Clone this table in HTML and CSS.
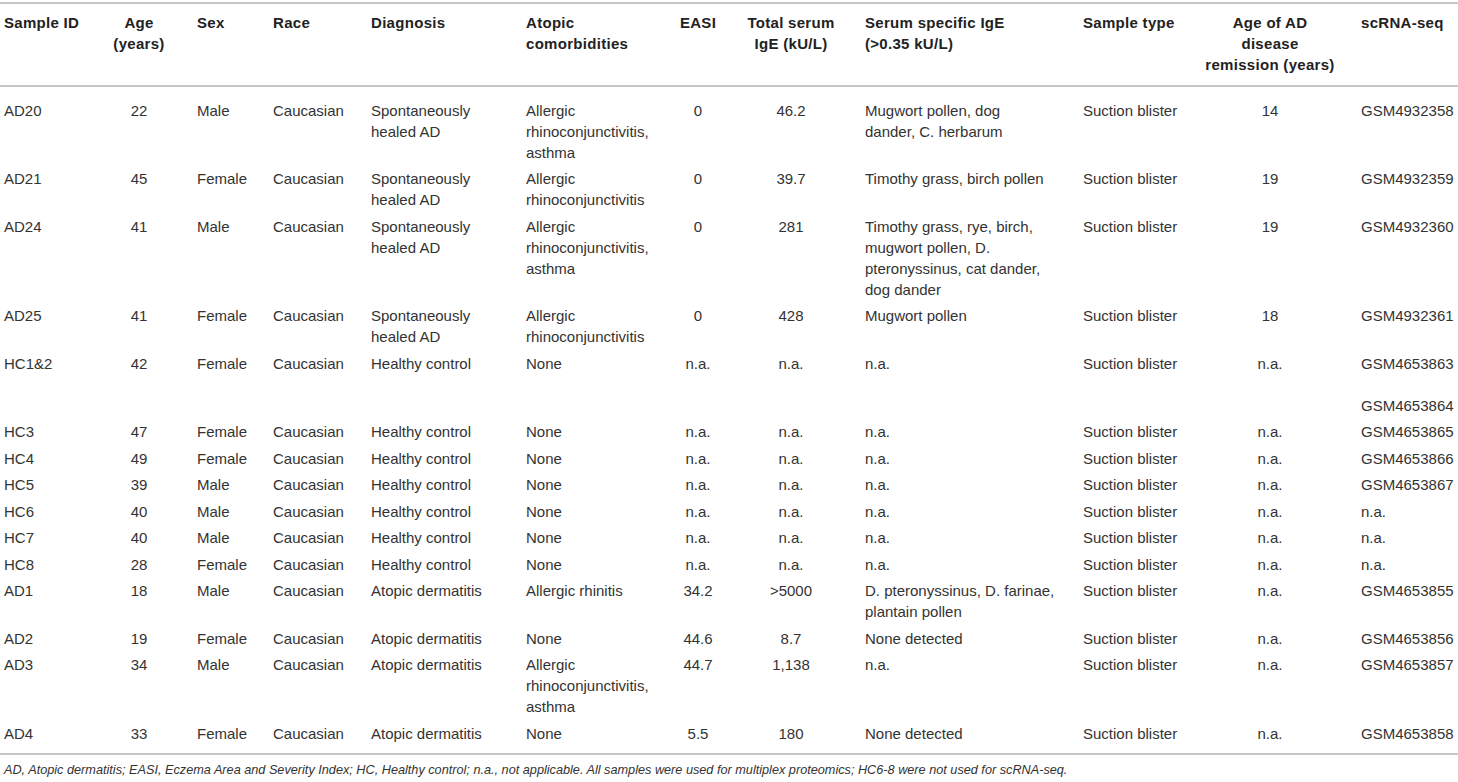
FILE: index.html
```html
<!DOCTYPE html>
<html lang="en">
<head>
<meta charset="utf-8">
<title>Sample characteristics</title>
<link rel="stylesheet" href="styles.css">
</head>
<body>
<div class="wrap">
<table class="data">
<colgroup>
<col class="c-id"><col class="c-age"><col class="c-sex"><col class="c-race"><col class="c-diag"><col class="c-atopic"><col class="c-easi"><col class="c-ige"><col class="c-sige"><col class="c-type"><col class="c-rem"><col class="c-seq">
</colgroup>
<thead>
<tr>
<th>Sample ID</th>
<th class="ctr">Age<br>(years)</th>
<th>Sex</th>
<th>Race</th>
<th>Diagnosis</th>
<th>Atopic<br>comorbidities</th>
<th class="ctr">EASI</th>
<th class="ctr">Total serum<br>IgE (kU/L)</th>
<th>Serum specific IgE<br>(&gt;0.35 kU/L)</th>
<th>Sample type</th>
<th class="ctr">Age of AD<br>disease<br>remission (years)</th>
<th>scRNA-seq</th>
</tr>
</thead>
<tbody>
<tr>
<td>AD20</td><td class="ctr">22</td><td>Male</td><td>Caucasian</td><td>Spontaneously<br>healed AD</td><td>Allergic<br>rhinoconjunctivitis,<br>asthma</td><td class="ctr">0</td><td class="ctr">46.2</td><td>Mugwort pollen, dog<br>dander, C. herbarum</td><td>Suction blister</td><td class="ctr">14</td><td>GSM4932358</td>
</tr>
<tr>
<td>AD21</td><td class="ctr">45</td><td>Female</td><td>Caucasian</td><td>Spontaneously<br>healed AD</td><td>Allergic<br>rhinoconjunctivitis</td><td class="ctr">0</td><td class="ctr">39.7</td><td>Timothy grass, birch pollen</td><td>Suction blister</td><td class="ctr">19</td><td>GSM4932359</td>
</tr>
<tr>
<td>AD24</td><td class="ctr">41</td><td>Male</td><td>Caucasian</td><td>Spontaneously<br>healed AD</td><td>Allergic<br>rhinoconjunctivitis,<br>asthma</td><td class="ctr">0</td><td class="ctr">281</td><td>Timothy grass, rye, birch,<br>mugwort pollen, D.<br>pteronyssinus, cat dander,<br>dog dander</td><td>Suction blister</td><td class="ctr">19</td><td>GSM4932360</td>
</tr>
<tr>
<td>AD25</td><td class="ctr">41</td><td>Female</td><td>Caucasian</td><td>Spontaneously<br>healed AD</td><td>Allergic<br>rhinoconjunctivitis</td><td class="ctr">0</td><td class="ctr">428</td><td>Mugwort pollen</td><td>Suction blister</td><td class="ctr">18</td><td>GSM4932361</td>
</tr>
<tr>
<td>HC1&amp;2</td><td class="ctr">42</td><td>Female</td><td>Caucasian</td><td>Healthy control</td><td>None</td><td class="ctr">n.a.</td><td class="ctr">n.a.</td><td>n.a.</td><td>Suction blister</td><td class="ctr">n.a.</td><td>GSM4653863<br>&nbsp;<br>GSM4653864</td>
</tr>
<tr>
<td>HC3</td><td class="ctr">47</td><td>Female</td><td>Caucasian</td><td>Healthy control</td><td>None</td><td class="ctr">n.a.</td><td class="ctr">n.a.</td><td>n.a.</td><td>Suction blister</td><td class="ctr">n.a.</td><td>GSM4653865</td>
</tr>
<tr>
<td>HC4</td><td class="ctr">49</td><td>Female</td><td>Caucasian</td><td>Healthy control</td><td>None</td><td class="ctr">n.a.</td><td class="ctr">n.a.</td><td>n.a.</td><td>Suction blister</td><td class="ctr">n.a.</td><td>GSM4653866</td>
</tr>
<tr>
<td>HC5</td><td class="ctr">39</td><td>Male</td><td>Caucasian</td><td>Healthy control</td><td>None</td><td class="ctr">n.a.</td><td class="ctr">n.a.</td><td>n.a.</td><td>Suction blister</td><td class="ctr">n.a.</td><td>GSM4653867</td>
</tr>
<tr>
<td>HC6</td><td class="ctr">40</td><td>Male</td><td>Caucasian</td><td>Healthy control</td><td>None</td><td class="ctr">n.a.</td><td class="ctr">n.a.</td><td>n.a.</td><td>Suction blister</td><td class="ctr">n.a.</td><td>n.a.</td>
</tr>
<tr>
<td>HC7</td><td class="ctr">40</td><td>Male</td><td>Caucasian</td><td>Healthy control</td><td>None</td><td class="ctr">n.a.</td><td class="ctr">n.a.</td><td>n.a.</td><td>Suction blister</td><td class="ctr">n.a.</td><td>n.a.</td>
</tr>
<tr>
<td>HC8</td><td class="ctr">28</td><td>Female</td><td>Caucasian</td><td>Healthy control</td><td>None</td><td class="ctr">n.a.</td><td class="ctr">n.a.</td><td>n.a.</td><td>Suction blister</td><td class="ctr">n.a.</td><td>n.a.</td>
</tr>
<tr>
<td>AD1</td><td class="ctr">18</td><td>Male</td><td>Caucasian</td><td>Atopic dermatitis</td><td>Allergic rhinitis</td><td class="ctr">34.2</td><td class="ctr">&gt;5000</td><td>D. pteronyssinus, D. farinae,<br>plantain pollen</td><td>Suction blister</td><td class="ctr">n.a.</td><td>GSM4653855</td>
</tr>
<tr>
<td>AD2</td><td class="ctr">19</td><td>Female</td><td>Caucasian</td><td>Atopic dermatitis</td><td>None</td><td class="ctr">44.6</td><td class="ctr">8.7</td><td>None detected</td><td>Suction blister</td><td class="ctr">n.a.</td><td>GSM4653856</td>
</tr>
<tr>
<td>AD3</td><td class="ctr">34</td><td>Male</td><td>Caucasian</td><td>Atopic dermatitis</td><td>Allergic<br>rhinoconjunctivitis,<br>asthma</td><td class="ctr">44.7</td><td class="ctr">1,138</td><td>n.a.</td><td>Suction blister</td><td class="ctr">n.a.</td><td>GSM4653857</td>
</tr>
<tr>
<td>AD4</td><td class="ctr">33</td><td>Female</td><td>Caucasian</td><td>Atopic dermatitis</td><td>None</td><td class="ctr">5.5</td><td class="ctr">180</td><td>None detected</td><td>Suction blister</td><td class="ctr">n.a.</td><td>GSM4653858</td>
</tr>
</tbody>
</table>
<p class="note">AD, Atopic dermatitis; EASI, Eczema Area and Severity Index; HC, Healthy control; n.a., not applicable. All samples were used for multiplex proteomics; HC6-8 were not used for scRNA-seq.</p>
</div>
</body>
</html>
```

FILE: styles.css
```css
html, body {
  margin: 0;
  padding: 0;
  background: #ffffff;
}

.wrap {
  padding-top: 2px;
  font-family: "Liberation Sans", Arial, sans-serif;
  color: #333333;
}

.data {
  width: 1458px;
  border-collapse: collapse;
  table-layout: fixed;
  font-size: 15px;
  line-height: 21px;
}

.c-id { width: 85px; }
.c-age { width: 108px; }
.c-sex { width: 76px; }
.c-race { width: 98px; }
.c-diag { width: 155px; }
.c-atopic { width: 153px; }
.c-easi { width: 46px; }
.c-ige { width: 140px; }
.c-sige { width: 218px; }
.c-type { width: 104px; }
.c-rem { width: 174px; }
.c-seq { width: 101px; }

.data thead tr {
  border-top: 2px solid #c6c6c6;
  border-bottom: 2px solid #c6c6c6;
}

.data th {
  font-weight: bold;
  color: #222222;
  text-align: left;
  vertical-align: top;
  padding: 7.5px 4px 10.5px;
  white-space: nowrap;
  letter-spacing: 0.3px;
}

.data td {
  vertical-align: top;
  text-align: left;
  padding: 3px 4px 2.5px;
  white-space: nowrap;
}

.data tbody tr:first-child td {
  padding-top: 12.5px;
}

.data tbody tr:last-child {
  border-bottom: 2px solid #c6c6c6;
}

.data tbody tr:last-child td {
  padding-bottom: 9.5px;
}

.data .ctr {
  text-align: center;
}

.note {
  margin: 6px 0 0;
  padding-left: 4px;
  font-size: 12.7px;
  line-height: 18px;
  font-style: italic;
  color: #333333;
}
```
